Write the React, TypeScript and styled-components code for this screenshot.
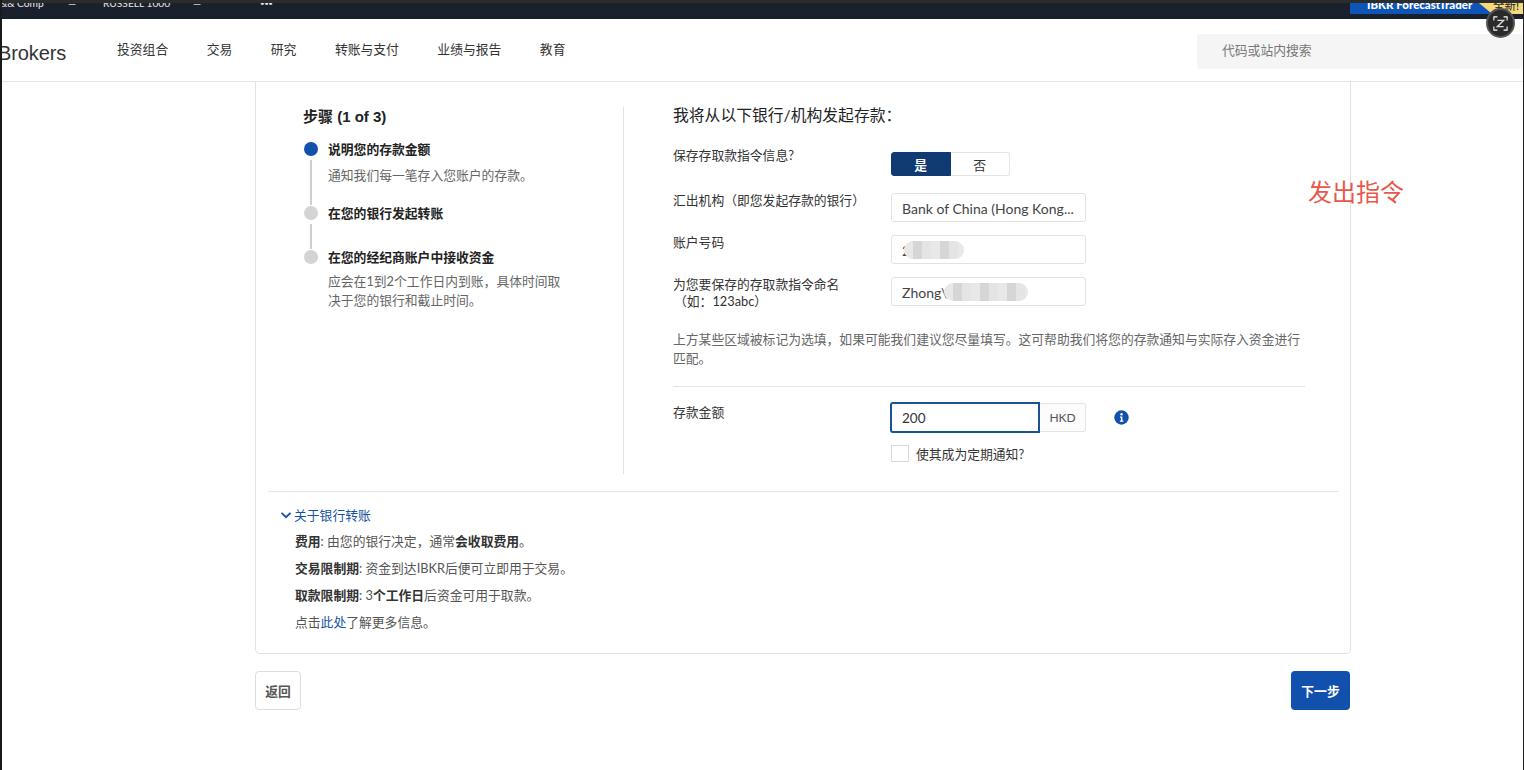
import React from "react";
import styled, { createGlobalStyle } from "styled-components";

const Global = createGlobalStyle`
  html, body { margin: 0; padding: 0; background: #fff; overflow: hidden; }
  body { font-family: "Lato", "Noto Sans CJK SC", sans-serif; color: #333; }
  * { box-sizing: border-box; }
`;

const Frame = styled.div`
  width: 1524px; height: 770px; overflow: hidden; position: relative;
  border-left: 2px solid #1a1a1a; border-right: 1px solid #222; background: #fff;
`;
const WindowEdge = styled.div`height: 3px; background: #2c2c2c; margin-left: -2px;`;
const TopBar = styled.div`
  height: 16px; background: #1b212c; color: #e4e6ea; display: flex; font-size: 11px;
  overflow: hidden; position: relative;
`;
const Ticker = styled.div`
  display: flex; align-items: center; height: 11px; margin-top: -5px; margin-left: -2px; line-height: 11px;
`;
const TickerText = styled.span<{ $w: number }>`width: ${(p) => p.$w}px; white-space: nowrap; flex: none; font-size: 10.2px;`;
const TickerDots = styled.span`font-size: 8px; white-space: nowrap; flex: none; letter-spacing: -.5px;`;
const Promo = styled.div`
  position: absolute; right: 0; top: 0; width: 173px; height: 11px; background: #0f55b8; color: #fff;
  font-size: 11.5px; font-weight: 900; line-height: 3px; padding-left: 17px; overflow: hidden;
`;
const PromoTag = styled.span`
  position: absolute; right: 0; top: 0; width: 44px; height: 11px; background: #f5d97a; color: #222;
  font-weight: 400; line-height: 5px; padding-left: 14px;
  clip-path: polygon(0 0, 100% 0, 100% 100%, 30% 100%);
`;
const ExpandFab = styled.button`
  position: absolute; right: 8px; top: 8px; width: 29px; height: 30px; border-radius: 50%;
  background: #2a2a2a; border: 2px solid #555; padding: 0; display: flex; align-items: center;
  justify-content: center; z-index: 3;
`;

const Nav = styled.header`
  height: 63px; display: flex; align-items: center; border-bottom: 1px solid #e4e4e4; background: #fff;
  position: relative; z-index: 1;
`;
const Logo = styled.div`
  font-family: "Liberation Sans", sans-serif; font-size: 20px; color: #333; width: 119px; flex: none;
  margin-left: -4px; padding-top: 6px; letter-spacing: -.1px;
`;
const Menu = styled.nav`display: flex; gap: 38.5px; font-size: 12.8px; color: #333; margin-top: -4px; flex: 1;`;
const MenuItem = styled.span`white-space: nowrap;`;
const Search = styled.div`
  width: 326px; height: 35px; background: #f5f5f5; border-radius: 2px; color: #777; font-size: 12.8px;
  line-height: 33px; padding-left: 25px; margin-top: 3px;
`;

const Main = styled.main`width: 1096px; margin-left: 253px;`;
const Card = styled.section`
  border: 1px solid #e2e2e2; border-top: 0; border-radius: 0 0 5px 5px; height: 572px;
  padding: 25px 12px 0;
`;
const Columns = styled.div`display: flex; height: 367px; padding-left: 35px;`;
const Steps = styled.div`width: 321px; border-right: 1px solid #e2e2e2; flex: none;`;
const StepsTitle = styled.h2`
  margin: 0 0 12px; font-size: 15px; line-height: 20px; font-weight: 700; color: #222;
  font-family: "Liberation Sans", "Noto Sans CJK SC", sans-serif;
`;
const Step = styled.div<{ $h: number }>`
  display: grid; grid-template-columns: 25px 1fr; height: ${(p) => p.$h}px;
`;
const Rail = styled.div`display: flex; flex-direction: column; align-items: center; width: 16px; padding-top: 3px;`;
const Dot = styled.span<{ $on?: boolean }>`
  width: 14px; height: 14px; border-radius: 50%; flex: none; background: ${(p) => (p.$on ? "#1150ad" : "#d4d4d4")};
`;
const RailLine = styled.span`width: 2px; flex: 1; background: #cfcfcf; margin: 4px 0 -2px;`;
const StepName = styled.div`font-size: 12.8px; font-weight: 700; line-height: 20px; color: #222;`;
const StepNote = styled.div<{ $mt: number }>`font-size: 12.8px; line-height: 19px; color: #666; margin-top: ${(p) => p.$mt}px; width: 236px;`;

const Form = styled.div`flex: 1; padding-left: 49px; width: 680px; max-width: 680px;`;
const FormTitle = styled.h3`margin: -2px 0 27px; font-size: 15.8px; font-weight: 400; line-height: 20px; color: #222;`;
const Row = styled.div<{ $h: number }>`
  display: grid; grid-template-columns: 218px 1fr; height: ${(p) => p.$h}px; font-size: 12.8px; color: #333;
`;
const Label = styled.div<{ $top?: number }>`line-height: 17px; margin-top: ${(p) => p.$top ?? -1}px;`;
const LabelSub = styled.div`padding-left: 1px;`;
const Toggle = styled.div`display: flex; width: 119px; height: 24px;`;
const ToggleBtn = styled.span<{ $on?: boolean }>`
  width: 60px; display: flex; align-items: center; justify-content: center; font-size: 12.8px;
  font-weight: ${(p) => (p.$on ? 700 : 400)}; color: ${(p) => (p.$on ? "#fff" : "#333")};
  background: ${(p) => (p.$on ? "#0f3a72" : "#fff")};
  border: 1px solid ${(p) => (p.$on ? "#0f3a72" : "#e4e4e4")};
  border-radius: ${(p) => (p.$on ? "3px 0 0 3px" : "0 3px 3px 0")};
  ${(p) => (p.$on ? "" : "border-left: 0;")}
`;
const Field = styled.div`
  position: relative; width: 195px; height: 29px; border: 1px solid #e2e2e2; border-radius: 3px;
  font-size: 14px; line-height: 29px; padding-left: 10px; color: #444; white-space: nowrap;
  overflow: hidden;
`;
const Blur = styled.span<{ $l: number; $w: number }>`
  position: absolute; left: ${(p) => p.$l}px; top: 5px; width: ${(p) => p.$w}px; height: 18px; border-radius: 9px;
  background: repeating-linear-gradient(90deg, #e8e8e8 0 9px, #d6d6d6 9px 18px, #e4e4e4 18px 27px);
  filter: blur(.6px);
`;
const Hint = styled.p`
  margin: 0; font-size: 12.8px; line-height: 19px; color: #666; height: 56px; width: 632px;
`;
const HRule = styled.hr`margin: 0 0 15px; border: 0; border-top: 1px solid #e4e4e4; width: 632px;`;
const AmountWrap = styled.div`display: flex; align-items: center; height: 31px; margin-left: -1px;`;
const AmountInput = styled.div`
  width: 150px; height: 31px; border: 2px solid #1b5296; border-radius: 3px 0 0 3px; font-size: 13.5px;
  line-height: 29px; padding-left: 10px; color: #333;
`;
const Addon = styled.div`
  width: 46px; height: 29px; border: 1px solid #e4e4e4; border-left: 0; border-radius: 0 3px 3px 0; background: #fcfcfc;
  font-size: 12px; line-height: 27px; text-align: center; color: #555;
`;
const InfoIcon = styled.svg`margin-left: 28px; width: 15px; height: 15px; flex: none;`;
const CheckRow = styled.label`display: flex; align-items: center; gap: 7px; font-size: 12.8px; color: #333; height: 18px;`;
const Box = styled.span`width: 18px; height: 17px; border: 1px solid #d9d9d9; background: #fff; flex: none;`;

const Divider = styled.hr`margin: 17px 0 13px; border: 0; border-top: 1px solid #e6e6e6;`;
const About = styled.div`padding-left: 12px; font-size: 12.8px; color: #555;`;
const AboutHead = styled.div`display: flex; align-items: center; gap: 2px; color: #1553a4; line-height: 20px; margin-bottom: 8px;`;
const AboutLine = styled.p`margin: 0 0 10px 15px; line-height: 17px;`;
const Strong = styled.b`font-weight: 700; color: #333;`;
const Link = styled.a`color: #1553a4;`;

const Actions = styled.div`display: flex; justify-content: space-between; align-items: flex-start; margin-top: 17px;`;
const Back = styled.button`
  width: 46px; height: 39px; background: #fff; border: 1px solid #dedede; border-radius: 4px; color: #555;
  font: 700 12.8px "Lato", "Noto Sans CJK SC", sans-serif; padding: 0;
`;
const Next = styled.button`
  width: 59px; height: 39px; background: #1150ad; border: 0; border-radius: 4px; color: #fff;
  font: 700 12.8px "Lato", "Noto Sans CJK SC", sans-serif; padding: 0; margin-right: 1px;
`;
const Annotation = styled.div`
  position: absolute; left: 1306px; top: 176px; font-size: 24px; line-height: 30px; color: #e8574a; font-weight: 400;
  font-family: "Noto Sans CJK SC", sans-serif;
`;

export default function App() {
  return (
    <>
      <Global />
      <Frame>
        <WindowEdge />
        <TopBar>
          <Ticker>
            <TickerText $w={68}>&amp;&amp; Comp</TickerText>
            <TickerText $w={35}>—</TickerText>
            <TickerText $w={90}>RUSSELL 1000</TickerText>
            <TickerText $w={67}>—</TickerText>
            <TickerDots>•••</TickerDots>
          </Ticker>
          <Promo>
            IBKR ForecastTrader
            <PromoTag>全新!</PromoTag>
          </Promo>
        </TopBar>
        <ExpandFab aria-label="expand">
          <svg width="15" height="15" viewBox="0 0 17 17" fill="none" stroke="#fff" strokeWidth="1.2">
            <path d="M1 5V1h4M12 1h4v4M16 12v4h-4M5 16H1v-4" />
            <path d="M5 5h7L5 12h7" stroke="#ddd" strokeWidth="1.6" />
          </svg>
        </ExpandFab>
        <Nav>
          <Logo>Brokers</Logo>
          <Menu>
            {["投资组合", "交易", "研究", "转账与支付", "业绩与报告", "教育"].map((m) => (
              <MenuItem key={m}>{m}</MenuItem>
            ))}
          </Menu>
          <Search>代码或站内搜索</Search>
        </Nav>
        <Main>
          <Card>
            <Columns>
              <Steps>
                <StepsTitle>步骤 (1 of 3)</StepsTitle>
                <Step $h={64}>
                  <Rail><Dot $on /><RailLine /></Rail>
                  <div>
                    <StepName>说明您的存款金额</StepName>
                    <StepNote $mt={7}>通知我们每一笔存入您账户的存款。</StepNote>
                  </div>
                </Step>
                <Step $h={44}>
                  <Rail><Dot /><RailLine /></Rail>
                  <StepName>在您的银行发起转账</StepName>
                </Step>
                <Step $h={80}>
                  <Rail><Dot /></Rail>
                  <div>
                    <StepName>在您的经纪商账户中接收资金</StepName>
                    <StepNote $mt={5}>应会在1到2个工作日内到账，具体时间取决于您的银行和截止时间。</StepNote>
                  </div>
                </Step>
              </Steps>
              <Form>
                <FormTitle>我将从以下银行/机构发起存款：</FormTitle>
                <Row $h={41}>
                  <Label $top={-5}>保存存取款指令信息?</Label>
                  <Toggle>
                    <ToggleBtn $on>是</ToggleBtn>
                    <ToggleBtn>否</ToggleBtn>
                  </Toggle>
                </Row>
                <Row $h={42}>
                  <Label>汇出机构（即您发起存款的银行）</Label>
                  <Field>Bank of China (Hong Kong...</Field>
                </Row>
                <Row $h={42}>
                  <Label>账户号码</Label>
                  <Field>2<Blur $l={12} $w={60} /></Field>
                </Row>
                <Row $h={53}>
                  <Label>
                    为您要保存的存取款指令命名
                    <LabelSub>（如：123abc）</LabelSub>
                  </Label>
                  <Field>Zhong\<Blur $l={52} $w={84} /></Field>
                </Row>
                <Hint>上方某些区域被标记为选填，如果可能我们建议您尽量填写。这可帮助我们将您的存款通知与实际存入资金进行匹配。</Hint>
                <HRule />
                <Row $h={42}>
                  <Label $top={2}>存款金额</Label>
                  <AmountWrap>
                    <AmountInput>200</AmountInput>
                    <Addon>HKD</Addon>
                    <InfoIcon viewBox="0 0 15 15">
                      <circle cx="7.5" cy="7.5" r="7.2" fill="#1150ad" />
                      <circle cx="7.5" cy="4.2" r="1.2" fill="#fff" />
                      <path d="M6 6.5h2.4v4h1v1.2H5.9v-1.2h1v-2.8H6z" fill="#fff" />
                    </InfoIcon>
                  </AmountWrap>
                </Row>
                <Row $h={18}>
                  <span />
                  <CheckRow><Box />使其成为定期通知?</CheckRow>
                </Row>
              </Form>
            </Columns>
            <Divider />
            <About>
              <AboutHead>
                <svg width="12" height="12" viewBox="0 0 12 12" fill="none" stroke="#1553a4" strokeWidth="1.8">
                  <path d="M1.5 3.8L6 8.2l4.5-4.4" />
                </svg>
                关于银行转账
              </AboutHead>
              <AboutLine><Strong>费用</Strong>: 由您的银行决定，通常<Strong>会收取费用</Strong>。</AboutLine>
              <AboutLine><Strong>交易限制期</Strong>: 资金到达IBKR后便可立即用于交易。</AboutLine>
              <AboutLine><Strong>取款限制期</Strong>: 3<Strong>个工作日</Strong>后资金可用于取款。</AboutLine>
              <AboutLine>点击<Link>此处</Link>了解更多信息。</AboutLine>
            </About>
          </Card>
          <Actions>
            <Back>返回</Back>
            <Next>下一步</Next>
          </Actions>
        </Main>
        <Annotation>发出指令</Annotation>
      </Frame>
    </>
  );
}
